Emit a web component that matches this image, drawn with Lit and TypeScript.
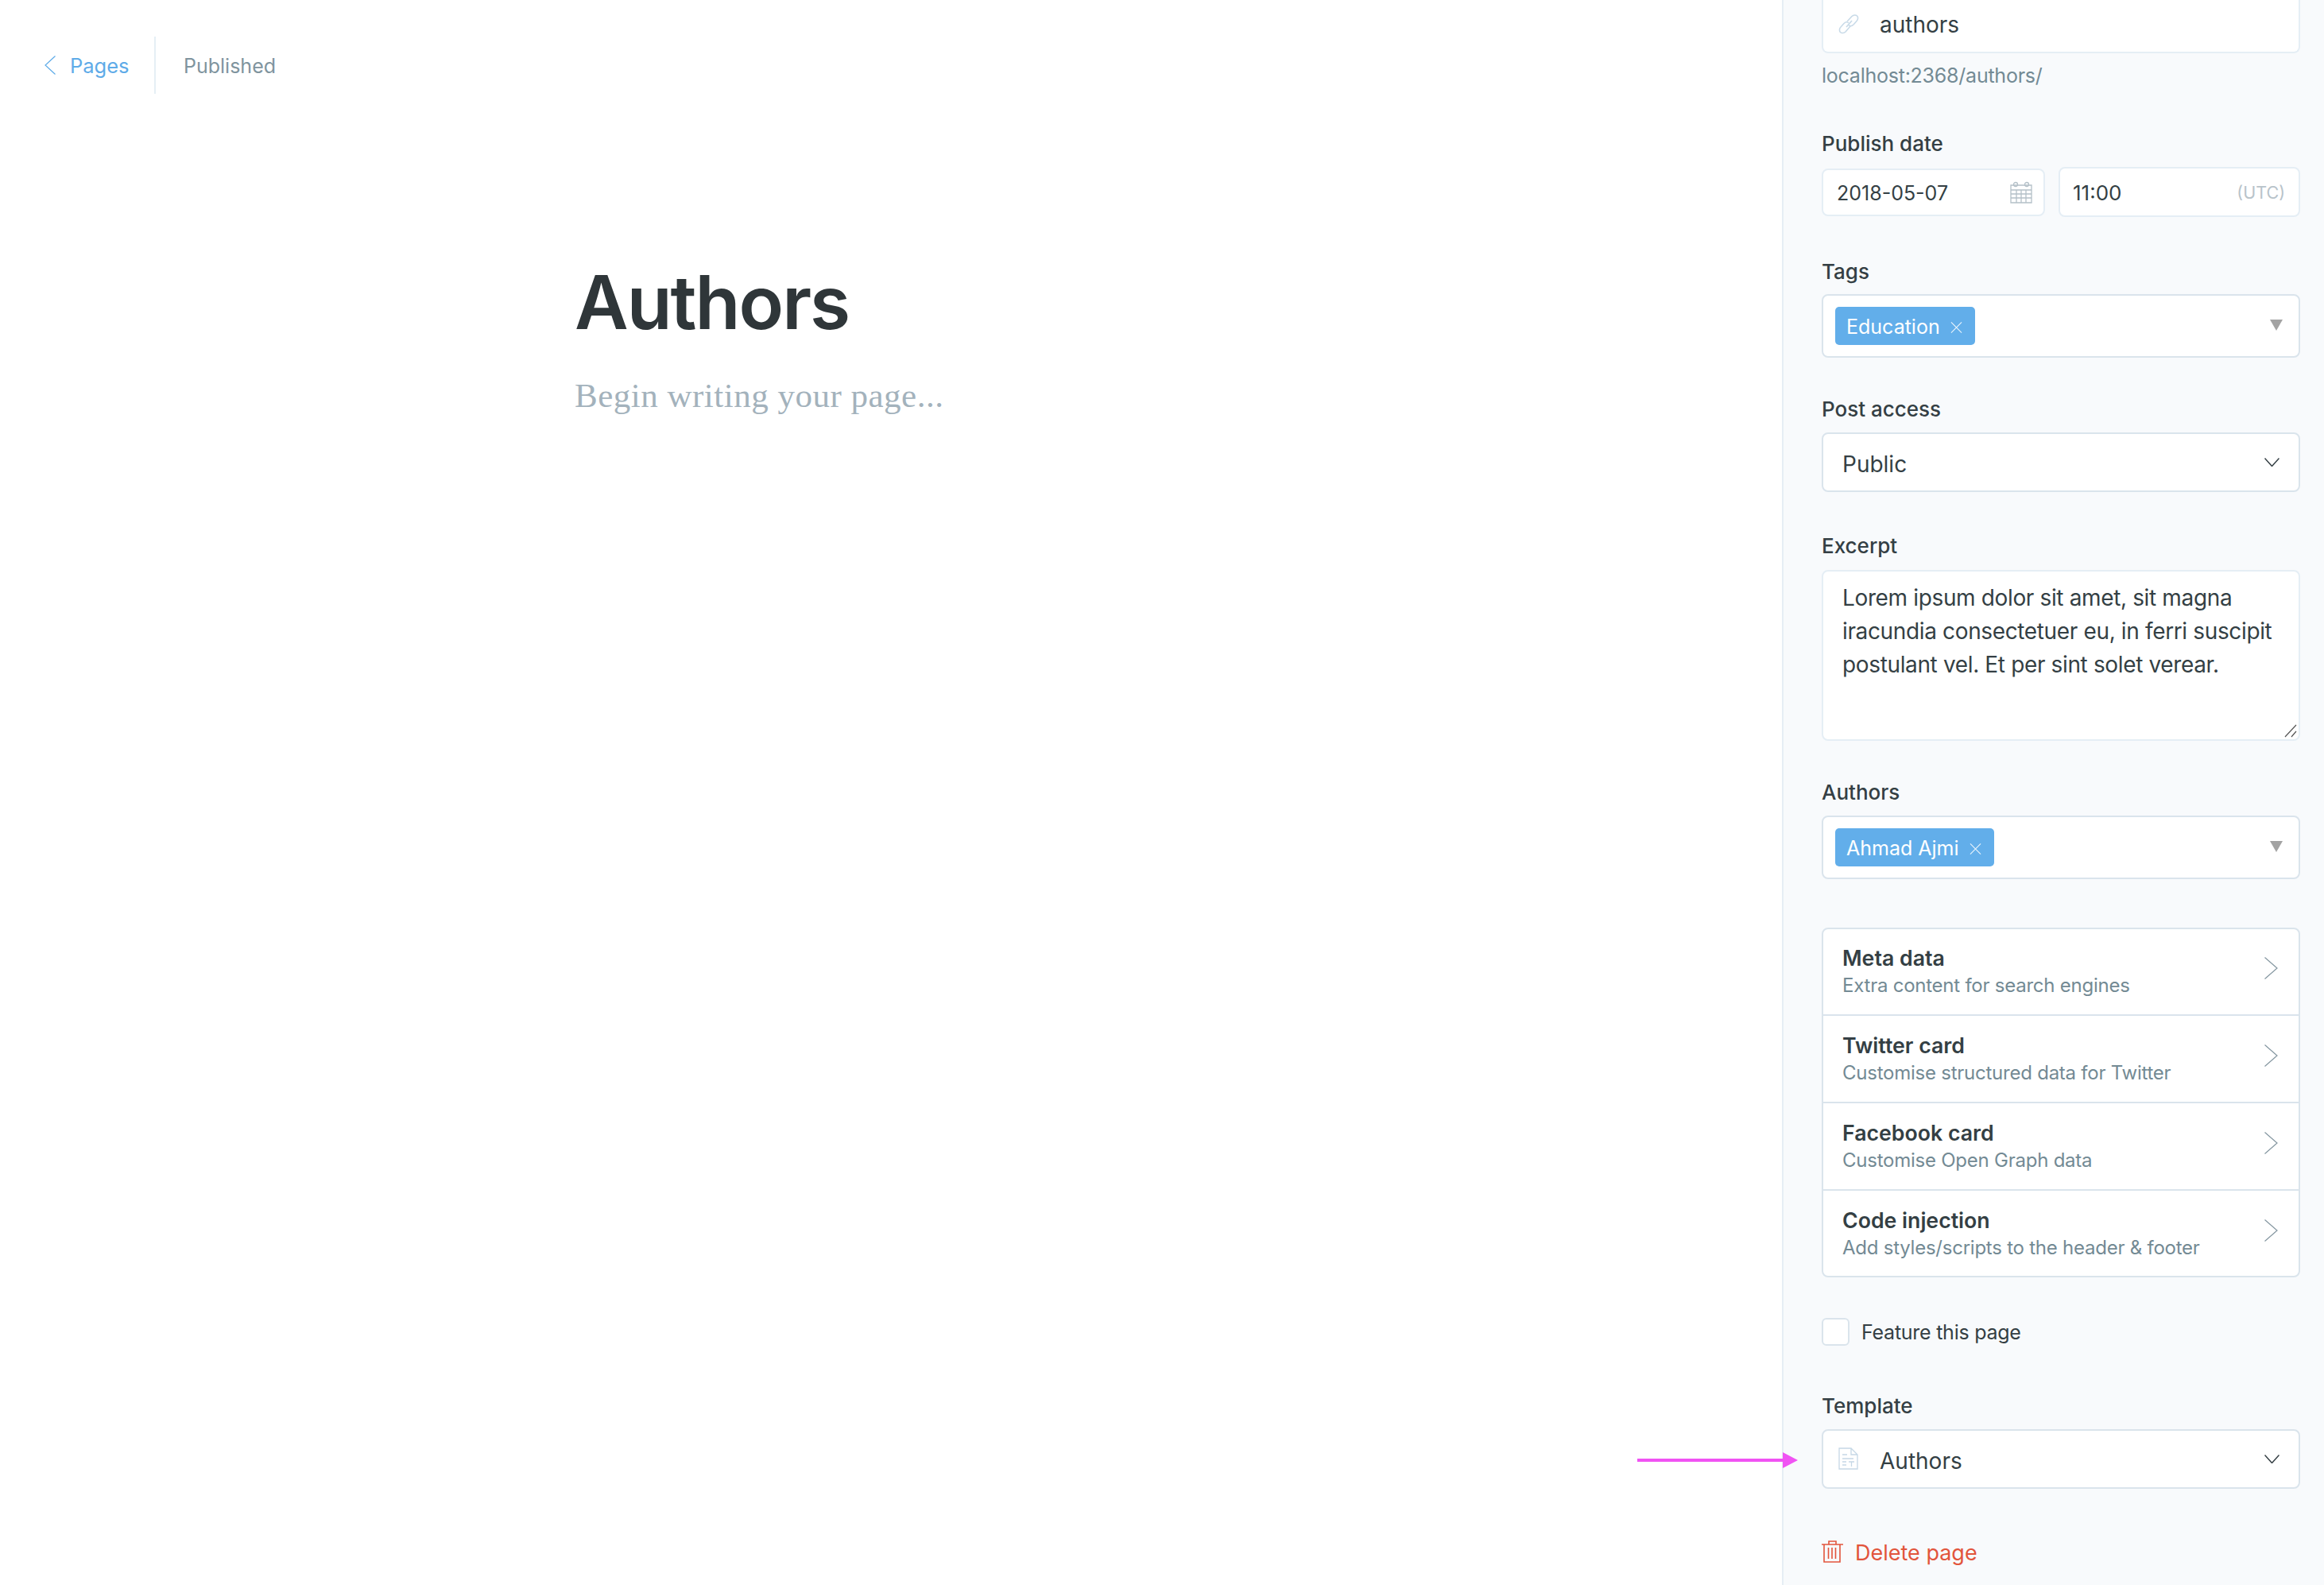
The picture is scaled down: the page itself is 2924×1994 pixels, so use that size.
import { LitElement, html, css } from "lit";
import { customElement } from "lit/decorators.js";

const chevDown = html`<svg class="chev-down" viewBox="0 0 19 11"><path d="M.5.5l9 10 9-10" fill="none" stroke="#343f44" stroke-width="1.5"/></svg>`;
const chevRight = html`<svg class="chev-right" viewBox="0 0 17 28"><path d="M.5.5L16 14 .5 27.5" fill="none" stroke="#8496a0" stroke-width="1.2"/></svg>`;
const caret = html`<svg class="caret" viewBox="0 0 16 14"><path d="M0 0h16L8 14z" fill="#a3a3a3"/></svg>`;
const cross = html`<svg class="cross" viewBox="0 0 16 16"><path d="M1 1l14 14M15 1L1 15" stroke="#fff" stroke-width="1.2" fill="none" opacity=".85"/></svg>`;

const rows = [
  ["Meta data", "Extra content for search engines"],
  ["Twitter card", "Customise structured data for Twitter"],
  ["Facebook card", "Customise Open Graph data"],
  ["Code injection", "Add styles/scripts to the header & footer"],
];

@customElement("app-root")
export class AppRoot extends LitElement {
  static styles = css`
    :host { display: block; width: 2924px; height: 1994px; overflow: hidden; position: relative; font-family: Inter, "Liberation Sans", sans-serif; color: #343f44; background: #fff; }
    * { box-sizing: border-box; }
    .page { display: flex; height: 100%; }
    .main { flex: 1; min-width: 0; }
    .topbar { display: flex; align-items: center; height: 72px; margin-top: 46px; padding-left: 56px; font-size: 25.5px; }
    .back { display: flex; align-items: center; color: #5eabe8; width: 140px; height: 72px; border-right: 2px solid #e5eff5; }
    .back svg { width: 14px; height: 24px; margin-right: 18px; }
    .status { color: #7f949e; margin-left: 35px; font-size: 25px; padding-top: 1px; }
    .editor { margin: 206px 0 0 723px; }
    h1 { margin: 0; font-size: 93px; line-height: 112px; font-weight: 600; color: #2f3639; letter-spacing: -2px; }
    .placeholder { margin-top: 34px; font-family: "Liberation Serif", serif; font-size: 43px; line-height: 56px; color: #a3b2bc; letter-spacing: .5px; }

    .side { width: 682px; flex: none; background: #f8fafc; border-left: 2px solid #e6eef4; padding: 0 30px 0 48px; }
    .box { background: #fff; border: 2px solid #e5eef5; border-radius: 8px; display: flex; align-items: center; position: relative; }
    .box.dark { border-color: #dae4ec; }
    .slug { height: 67px; border-top: none; border-top-left-radius: 0; border-top-right-radius: 0; padding-left: 18px; font-size: 28px; padding-bottom: 3px; }
    .slug svg { width: 28px; height: 27px; margin-right: 25px; margin-bottom: 1px; }
    .help { margin-top: 10px; font-size: 25px; letter-spacing: -.24px; line-height: 36px; color: #738a94; }
    .label { display: block; font-size: 26px; line-height: 36px; font-weight: 500; color: #343f44; }
    .m47 { margin-top: 47px; } .m50 { margin-top: 50px; } .m51 { margin-top: 51px; } .m58 { margin-top: 58px; }
    .g10 { margin-top: 10px; } .g11 { margin-top: 11px; } .g12 { margin-top: 12px; }
    .dt { display: flex; align-items: center; height: 63px; gap: 17px; }
    .date { width: 281px; height: 60px; padding: 2px 14px 0 17px; font-size: 25px; justify-content: space-between; }
    .date svg { width: 28px; height: 28px; margin-top: -2px; }
    .time { flex: 1; height: 63px; padding: 2px 17px 0 16px; font-size: 26px; justify-content: space-between; }
    .utc { font-size: 21.5px; color: #b8c3ca; margin-top: -2px; }
    .multi { height: 80px; padding-left: 15px; justify-content: space-between; padding-right: 20px; }
    .tag { display: flex; align-items: center; height: 48px; background: #62aeea; color: #fff; border-radius: 5px; padding: 2px 16px 0 14px; font-size: 25px; }
    .cross { width: 15px; height: 16px; margin-left: 13px; margin-top: 2px; }
    .caret { width: 16px; height: 14px; margin-top: -2px; }
    .select { height: 75px; padding: 4px 24px 0 24px; font-size: 28px; justify-content: space-between; }
    .chev-down { width: 19px; height: 11px; margin-top: -4px; }
    .area { height: 215px; padding: 12px 24px; font-size: 28px; letter-spacing: -.36px; line-height: 42px; align-items: flex-start; }
    .grip { position: absolute; right: 2px; bottom: 2px; width: 16px; height: 18px; }
    .card { margin-top: 61px; background: #fff; border: 2px solid #dae4ec; border-radius: 8px; }
    .row { height: 110px; display: flex; align-items: center; justify-content: space-between; padding: 1px 25px 0 24px; border-top: 2px solid #dae4ec; }
    .row:first-child { height: 107px; border-top: none; padding-top: 0; }
    .row:last-child { height: 109px; padding-top: 2px; }
    .row-t { font-size: 26.7px; line-height: 36px; font-weight: 600; color: #343f44; margin: -4px 0 2px; }
    .row-s { font-size: 24px; letter-spacing: -.24px; line-height: 30px; color: #738a94; }
    .chev-right { width: 17px; height: 28px; margin-right: 1px; margin-top: -10px; }
    .check { display: flex; align-items: center; height: 35px; margin-top: 51px; font-size: 25px; letter-spacing: -.25px; }
    .cb { width: 35px; height: 35px; background: #fff; border: 2px solid #dae4ec; border-radius: 6px; margin-right: 15px; }
    .tpl { padding-left: 19px; }
    .tpl-l { display: flex; align-items: center; }
    .tpl svg.doc { width: 25px; height: 28px; margin-right: 27px; margin-top: -5px; }
    .del { display: flex; align-items: center; margin-top: 65px; height: 28px; color: #e2553c; font-size: 27px; }
    .del svg { width: 27px; height: 28px; margin-right: 15px; }
    .del span { padding-top: 3px; }
    .arrow { position: absolute; left: 2060px; top: 1827px; width: 202px; height: 20px; }
  `;

  render() {
    return html`
      <div class="page">
        <div class="main">
          <div class="topbar">
            <div class="back">
              <svg viewBox="0 0 14 24"><path d="M13.500.5L1 12l12.500 11.500" fill="none" stroke="#5eabe8" stroke-width="1.2"/></svg>
              Pages
            </div>
            <div class="status">Published</div>
          </div>
          <div class="editor">
            <h1>Authors</h1>
            <div class="placeholder">Begin writing your page...</div>
          </div>
        </div>
        <div class="side">
          <div class="box slug">
            <svg viewBox="0 0 28 27" fill="none" stroke="#c8dae8" stroke-width="1.6">
              <path d="M11 17l7-8"/>
              <path d="M12 10l6-6.500c2-2 5-2 6.500-.5s1.500 4.500-.5 6.500l-4 4.500c-2 2-4.500 2-6 .5"/>
              <path d="M16 16l-6 7c-2 2-5 2-6.500.5S2 19 4 17l4-4.500c2-2 4.500-2 6-.5"/>
            </svg>
            authors
          </div>
          <div class="help">localhost:2368/authors/</div>

          <div class="label m50">Publish date</div>
          <div class="dt g11">
            <div class="box date">2018-05-07
              <svg viewBox="0 0 28 28" fill="none" stroke="#b4c0c8" stroke-width="1.3">
                <path d="M1 5h26v22H1zM1 11h26M1 16h26M1 21h26M8 11v16M14 11v16M20 11v16"/>
                <circle cx="7" cy="4" r="2.5"/><circle cx="21" cy="4" r="2.5"/>
              </svg>
            </div>
            <div class="box time">11:00<span class="utc">(UTC)</span></div>
          </div>

          <div class="label m51">Tags</div>
          <div class="box dark multi g10"><div class="tag">Education${cross}</div>${caret}</div>

          <div class="label m47">Post access</div>
          <div class="box dark select g11">Public${chevDown}</div>

          <div class="label m50">Excerpt</div>
          <div class="box area g12">
            <div>Lorem ipsum dolor sit amet, sit magna<br />iracundia consectetuer eu, in ferri suscipit<br />postulant vel. Et per sint solet verear.</div>
            <svg class="grip" viewBox="0 0 16 18"><path d="M1 17L15 2M9 17l6-7" stroke="#555" stroke-width="1.2" fill="none"/></svg>
          </div>

          <div class="label m47">Authors</div>
          <div class="box dark multi g11"><div class="tag">Ahmad Ajmi${cross}</div>${caret}</div>

          <div class="card">
            ${rows.map(([t, s]) => html`
              <div class="row">
                <div><div class="row-t">${t}</div><div class="row-s">${s}</div></div>
                ${chevRight}
              </div>`)}
          </div>

          <div class="check"><div class="cb"></div>Feature this page</div>

          <div class="label m58">Template</div>
          <div class="box dark select tpl g11">
            <div class="tpl-l">
              <svg class="doc" viewBox="0 0 25 28" fill="none" stroke="#c6d8e6" stroke-width="1.3">
                <path d="M1 1h15l8 8v18H1zM16 1v8h8"/>
                <path d="M5 9h6M5 14h14M5 18h5M5 22h5M13 18h7M16.500 18v6"/>
              </svg>
              Authors
            </div>
            ${chevDown}
          </div>

          <div class="del">
            <svg viewBox="0 0 27 28" fill="none" stroke="#e2553c" stroke-width="1.6">
              <path d="M0 5h27M9 5V1h9v4M3 5v22h20V5M8.500 9v14M13 9v14M17.500 9v14"/>
            </svg>
            <span>Delete page</span>
          </div>
        </div>
      </div>
      <svg class="arrow" viewBox="0 0 202 20"><path d="M0 8h183V0l19 10-19 10v-8H0z" fill="#f053f3"/></svg>
    `;
  }
}
